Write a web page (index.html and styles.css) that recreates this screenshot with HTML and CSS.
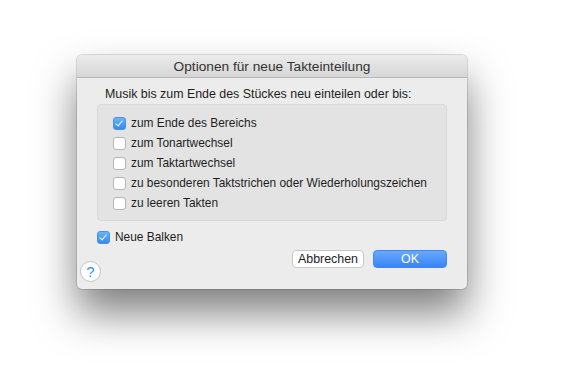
FILE: index.html
```html
<!DOCTYPE html>
<html lang="de">
<head>
  <meta charset="UTF-8">
  <title>Optionen für neue Takteinteilung</title>
  <link rel="stylesheet" href="styles.css">
</head>
<body>
  <div class="dialog">
    <div class="titlebar">Optionen für neue Takteinteilung</div>
    <div class="content">
      <div class="group-label">Musik bis zum Ende des Stückes neu einteilen oder bis:</div>
      <div class="group">
        <label class="check"><span class="box on"></span>zum Ende des Bereichs</label>
        <label class="check"><span class="box"></span>zum Tonartwechsel</label>
        <label class="check"><span class="box"></span>zum Taktartwechsel</label>
        <label class="check"><span class="box"></span>zu besonderen Taktstrichen oder Wiederholungszeichen</label>
        <label class="check"><span class="box"></span>zu leeren Takten</label>
      </div>
      <label class="check beams"><span class="box on"></span>Neue Balken</label>
      <div class="footer">
        <button class="help">?</button>
        <div class="buttons">
          <button class="btn">Abbrechen</button>
          <button class="btn primary">OK</button>
        </div>
      </div>
    </div>
  </div>
</body>
</html>
```

FILE: styles.css
```css
html, body {
  margin: 0;
  min-height: 386px;
  background: #fff;
}
body {
  padding: 55px 0 0 77px;
  box-sizing: border-box;
  font-family: "Liberation Sans", Arial, sans-serif;
  font-size: 12.4px;
  color: #1e1e1e;
}
.dialog {
  width: 390px;
  height: 234px;
  background: #ececec;
  border-radius: 5px;
  box-shadow: 0 0 0 1px rgba(0,0,0,0.12), 0 24px 42px rgba(0,0,0,0.5);
  overflow: hidden;
}
.titlebar {
  height: 22px;
  line-height: 23px;
  text-align: center;
  font-size: 13.7px;
  color: #333;
  background: linear-gradient(#ebebeb, #d6d6d6);
  border-bottom: 1px solid #b9b9b9;
}
.content {
  padding: 8px 20px 0 20px;
}
.group-label {
  padding-left: 8px;
  height: 18px;
  line-height: 16px;
  white-space: nowrap;
}
.group {
  background: #e3e3e3;
  border: 1px solid #dadada;
  border-radius: 4px;
  padding: 10px 15px 8px;
  height: 97px;
}
.check {
  display: flex;
  align-items: center;
  height: 20px;
  gap: 5px;
  margin-top: -2px;
  white-space: nowrap;
  font-size: 11.9px;
}
.check + .check {
  margin-top: 0;
}
.box {
  flex: none;
  width: 11px;
  height: 11px;
  border: 1px solid #b5b5b5;
  border-radius: 3px;
  background: #fff;
  position: relative;
}
.box.on {
  background: linear-gradient(#6cb3fa, #2f8cf6);
  border-color: #4a90e8;
}
.box.on::after {
  content: "";
  position: absolute;
  left: 3px;
  top: 1px;
  width: 3px;
  height: 6px;
  border: solid #fff;
  border-width: 0 1.6px 1.6px 0;
  transform: rotate(40deg);
}
.beams {
  margin-top: 6px;
}
.footer {
  display: flex;
  justify-content: space-between;
  align-items: flex-end;
  margin-top: 3px;
  margin-left: -17px;
}
.help {
  width: 21px;
  height: 21px;
  border-radius: 50%;
  border: 1px solid #c4c4c4;
  background: #fff;
  color: #3a8ef2;
  font-family: "Liberation Sans", Arial, sans-serif;
  font-size: 15px;
  padding: 0;
  line-height: 19px;
  margin-bottom: -14px;
}
.buttons {
  display: flex;
  gap: 9px;
}
.btn {
  height: 18px;
  width: 72px;
  padding: 0;
  border: 1px solid #c8c8c8;
  border-radius: 4px;
  background: #fff;
  font-family: "Liberation Sans", Arial, sans-serif;
  font-size: 12.4px;
  color: #1e1e1e;
}
.btn.primary {
  width: 74px;
  border-color: #3f87f3;
  background: linear-gradient(#6aa9fb, #3784f7);
  color: #fff;
}
```
